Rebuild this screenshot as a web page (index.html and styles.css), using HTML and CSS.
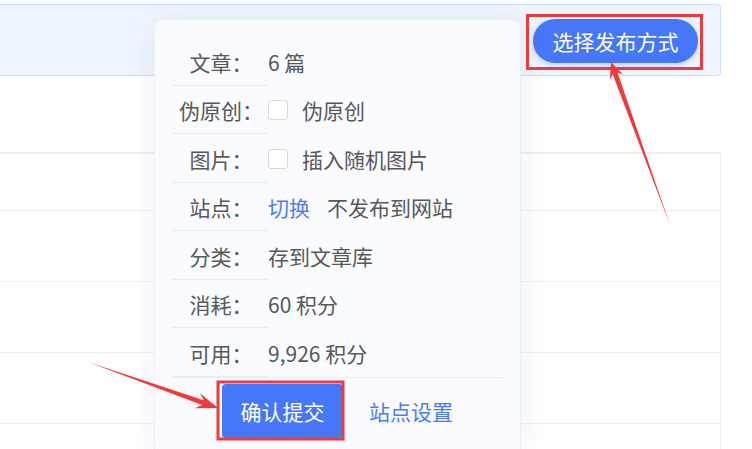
FILE: index.html
```html
<!DOCTYPE html>
<html lang="zh-CN">

<head>
  <meta charset="UTF-8" />
  <meta name="viewport" content="width=device-width, initial-scale=1.0" />
  <title>选择发布方式</title>
  <link rel="stylesheet" href="styles.css">
</head>

<body>
  <div class="page">
    <div class="toolbar">
      <button class="pub-btn">选择发布方式</button>
    </div>

    <div class="list">
      <div class="list-head"></div>
      <div class="list-row"></div>
      <div class="list-row"></div>
      <div class="list-row"></div>
      <div class="list-row list-row-last"></div>
    </div>
  </div>

  <div class="popover">
    <div class="info-row">
      <span class="label">文章：</span>
      <span class="value">6 篇</span>
    </div>
    <div class="info-row">
      <span class="label">伪原创：</span>
      <span class="value"><span class="check"></span>伪原创</span>
    </div>
    <div class="info-row">
      <span class="label">图片：</span>
      <span class="value"><span class="check"></span>插入随机图片</span>
    </div>
    <div class="info-row">
      <span class="label">站点：</span>
      <span class="value"><a href="#" class="link">切换</a>不发布到网站</span>
    </div>
    <div class="info-row">
      <span class="label">分类：</span>
      <span class="value">存到文章库</span>
    </div>
    <div class="info-row">
      <span class="label">消耗：</span>
      <span class="value">60 积分</span>
    </div>
    <div class="info-row">
      <span class="label">可用：</span>
      <span class="value">9,926 积分</span>
    </div>
    <div class="pop-footer">
      <button class="submit-btn">确认提交</button>
      <a href="#" class="link site-link">站点设置</a>
    </div>
  </div>

  <!-- 标注：红框和箭头 -->
  <svg class="marks" width="752" height="449" viewBox="0 0 752 449">
    <rect x="527.5" y="15.5" width="174" height="53" fill="none" stroke="#f03b3b" stroke-width="3" />
    <rect x="218" y="382" width="125" height="57" fill="none" stroke="#f03b3b" stroke-width="3" />
    <polygon fill="#f03b3b" points="88,362 203.7,400.3 200,393.2 218,408 194.6,408.2 202.1,405.1" />
    <polygon fill="#f03b3b" points="670,225 617.5,72.4 623,74.6 611,62 609.8,79.4 612.7,74.2" />
  </svg>
</body>

</html>
```

FILE: styles.css
```css
body {
  margin: 0;
  font-family: "Noto Sans CJK SC", "Noto Sans", sans-serif;
  background: #fff;
  color: #585858;
  overflow: hidden;
}

.page {
  padding: 4px 31px 0 0;
}

.toolbar {
  height: 72px;
  box-sizing: border-box;
  background-color: #eef5fe;
  border: 1px solid #c8ddf8;
  border-left: none;
  border-radius: 0 4px 4px 0;
  display: flex;
  align-items: center;
  justify-content: flex-end;
  padding-right: 22px;
}

.pub-btn {
  width: 165px;
  height: 44px;
  border: none;
  border-radius: 22px;
  background-color: #4677f8;
  color: #fff;
  font-family: inherit;
  font-size: 21px;
  box-shadow: 0 2px 6px rgba(70, 119, 248, 0.3);
  margin-top: 1px;
  padding: 0;
}

.list {
  margin-top: 76px;
  border-top: 2px solid #eceef3;
  border-right: 1px solid #eceef4;
}

.list-head {
  height: 56px;
  border-bottom: 1px solid #eef0f6;
}

.list-row {
  height: 70px;
  border-bottom: 1px solid #eef0f6;
}

.list-row-last {
  height: 28px;
  border-bottom: none;
}

.popover {
  position: absolute;
  left: 154px;
  top: 19px;
  width: 367px;
  height: 430px;
  box-sizing: border-box;
  background-color: #f9fbff;
  border: 1px solid #eceff5;
  border-bottom: none;
  border-radius: 8px 8px 0 0;
  box-shadow: 0 2px 28px rgba(30, 40, 80, 0.07);
  padding: 17px 18px 0 17px;
}

.info-row {
  display: flex;
  height: 48.5px;
  font-size: 21px;
  line-height: 24px;
}

.label {
  width: 96px;
  flex-shrink: 0;
  padding: 2px 0 0 2px;
  box-sizing: border-box;
  display: flex;
  align-items: center;
  justify-content: center;
  border-bottom: 1px solid #e6edf8;
}

.info-row:last-of-type .label {
  border-bottom: none;
}

.value {
  display: flex;
  align-items: center;
  padding-top: 1px;
}

.check {
  width: 20px;
  height: 20px;
  box-sizing: border-box;
  background: #fff;
  border: 1px solid #d6d9e0;
  border-radius: 3px;
  margin-right: 14px;
}

.link {
  color: #4a7bf6;
  text-decoration: none;
  margin-right: 17px;
}

.pop-footer {
  border-top: 1px solid #e6edf8;
  display: flex;
  align-items: center;
  padding-top: 6px;
}

.submit-btn {
  width: 121px;
  height: 54px;
  margin-left: 50px;
  border: none;
  border-radius: 4px;
  background-color: #4677f8;
  color: #fff;
  font-family: inherit;
  font-size: 21px;
  padding: 0;
}

.site-link {
  font-size: 21px;
  margin-left: 26px;
}

.marks {
  position: absolute;
  left: 0;
  top: 0;
  pointer-events: none;
}
```
